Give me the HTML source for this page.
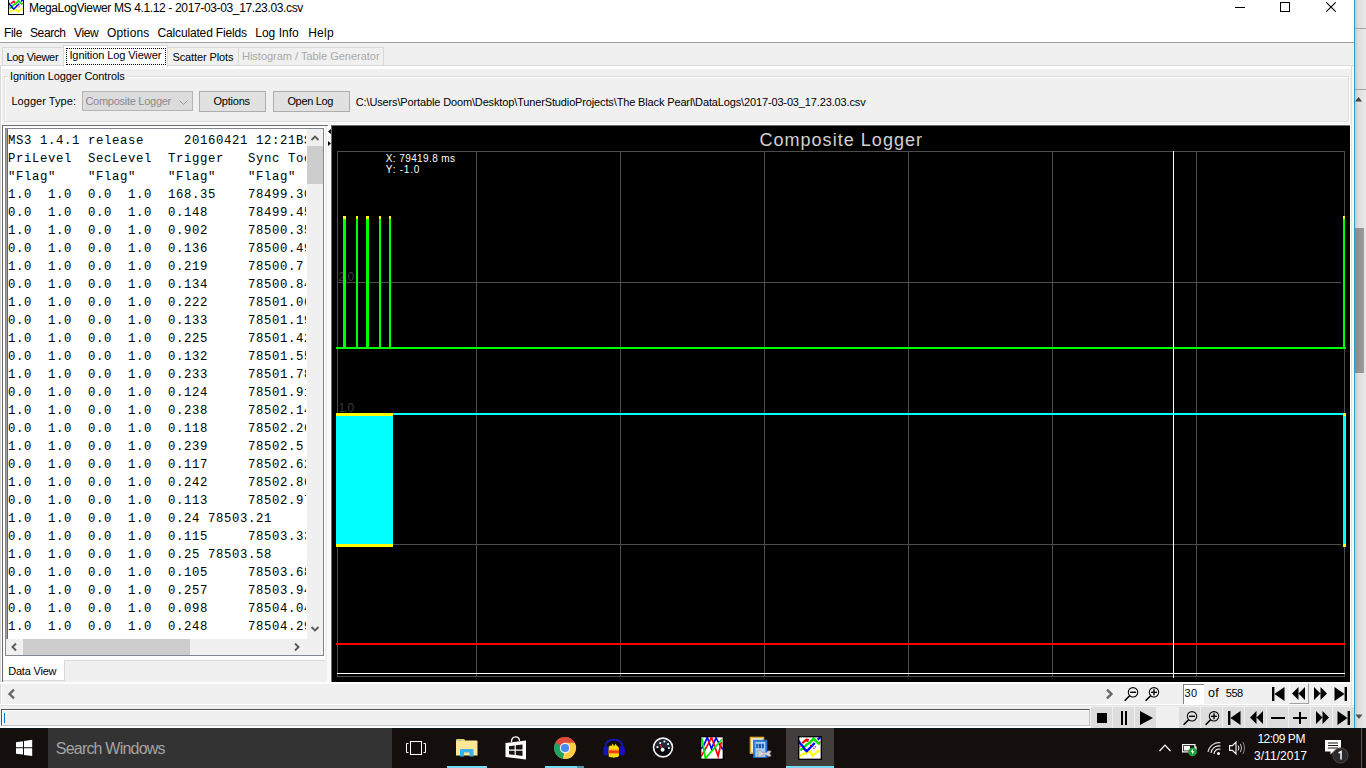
<!DOCTYPE html>
<html lang="en"><head><meta charset="utf-8"><title>MegaLogViewer MS 4.1.12 - 2017-03-03_17.23.03.csv</title>
<style>
html,body{margin:0;padding:0}
body{width:1366px;height:768px;overflow:hidden;position:relative;background:#f0f0f0;font-family:"Liberation Sans",sans-serif;color:#000;font-size:11px}
.a,.a *{position:absolute;box-sizing:border-box}
.t{white-space:pre;line-height:1;margin:0}
svg{display:block;overflow:visible}
/* window chrome */
#titlebar{left:0;top:0;width:1354px;height:42px;background:#fff}
#menuline{left:0;top:42px;width:1354px;height:1px;background:#a0a0a0}
#wborder{left:1354px;top:0;width:1px;height:728px;background:#2b9fd0}
#rstrip{left:1355px;top:0;width:11px;height:728px;background:linear-gradient(90deg,#c9c9c9 0,#dedede 30%,#e9e9e9 100%)}
.title{left:29px;top:1px;font-size:12px;height:14px;line-height:14px}
.menu{top:26px;font-size:12px;height:15px;line-height:15px}
/* tabs */
.tab{background:#f0f0f0;border:1px solid #d9d9d9;border-bottom:none}
.tabsel{background:#fff;border:1px solid #d9d9d9;border-bottom:none}
.tl{font-size:11px;height:14px;line-height:14px}
/* chart */
#chart{left:331px;top:126px;width:1019px;height:556px;background:#000;overflow:hidden}
.gv{top:25px;width:1px;height:526px;background:#4d4d4d}
.gh{left:6px;height:1px;width:1008px;background:#4d4d4d}
/* taskbar */
#taskbar{left:0;top:728px;width:1366px;height:40px;background:#140e0c;overflow:hidden}
/*FIT*/
#ttl{letter-spacing:-0.354px!important;left:29.00px!important}
#m1{letter-spacing:-0.334px!important;left:4.00px!important}
#m2{letter-spacing:-0.400px!important;left:30.00px!important}
#m3{letter-spacing:-0.334px!important;left:74.00px!important}
#m4{letter-spacing:0.167px!important;left:107.00px!important}
#m5{letter-spacing:-0.166px!important;left:157.60px!important}
#m6{letter-spacing:0.025px!important;left:255.20px!important}
#m7{letter-spacing:0.264px!important;left:308.20px!important}
#tb1{letter-spacing:-0.291px!important;left:6.40px!important}
#tb2{letter-spacing:-0.079px!important;left:69.40px!important}
#tb3{letter-spacing:-0.100px!important;left:172.40px!important}
#tb4{letter-spacing:-0.014px!important;left:242.00px!important}
#gb{letter-spacing:-0.087px!important;left:8.00px!important}
#lt{letter-spacing:0.053px!important;left:11.40px!important}
#cb{letter-spacing:-0.267px!important;left:85.40px!important}
#b1{letter-spacing:-0.200px!important;left:213.40px!important}
#b2{letter-spacing:-0.340px!important;left:287.40px!important}
#pth{letter-spacing:-0.140px!important;left:355.80px!important}
#dv{letter-spacing:-0.200px!important;left:8.20px!important}
#n30{letter-spacing:0.400px!important;left:1184.40px!important}
#nof{letter-spacing:0.400px!important;left:1208.00px!important}
#n558{letter-spacing:-0.500px!important;left:1225.80px!important}
#sw{letter-spacing:-0.796px!important;left:55.80px!important}
#clk{letter-spacing:-0.483px!important;left:1257.40px!important}
#dat{letter-spacing:0.046px!important;left:1254.00px!important}
#ctitle{letter-spacing:1.039px!important;left:428.40px!important}
#rx{letter-spacing:0.401px!important;left:54.80px!important}
#ry{letter-spacing:0.768px!important;left:54.80px!important}
#ax2{letter-spacing:-0.400px!important;left:7.20px!important}
#ax1{letter-spacing:-0.500px!important;left:7.40px!important}
/*ENDFIT*/
</style></head><body>

<!-- ===== window chrome ===== -->
<div class="a" id="titlebar"></div>
<div class="a" id="menuline"></div>
<div class="a" id="wborder"></div>
<div class="a" id="rstrip"></div>
<div class="a" style="left:1355px;top:28px;width:11px;height:1px;background:#a3a3a3"></div>
<div class="a" style="left:1355px;top:89px;width:11px;height:1px;background:#a3a3a3"></div>
<div class="a" style="left:1355px;top:228px;width:9px;height:145px;background:linear-gradient(90deg,#8c8a8a,#9c9c9c)"></div>
<svg class="a" style="left:1355px;top:96px" width="8" height="6"><path d="M0 5.5L3.5 1L7 5.5Z" fill="#404040"/></svg>
<svg class="a" style="left:1355px;top:714px" width="8" height="6"><path d="M0.5 0.5L4 5L7.5 0.5Z" fill="#505050"/></svg>

<!-- title bar -->
<svg class="a" style="left:8px;top:-1px;overflow:hidden" width="16" height="16" viewBox="0 0 24 24"><rect x="0.6" y="0.6" width="22.8" height="22.8" fill="#fff" stroke="#000" stroke-width="1.5"/><polyline points="1.75,20.1 4.25,18.4 8.4,16.75 12.2,15.5 14.7,19.7 18.4,16.3 21.75,14.25" fill="none" stroke="#ffff00" stroke-width="2.2"/><polyline points="4.25,7.2 8.4,3.6 9.7,3.8 9.3,5.9" fill="none" stroke="#ff0000" stroke-width="2.2"/><path d="M1.2 10.5H2.6M12 9.5H13.2M21.2 6.3H22.4" stroke="#ff0000" stroke-width="1.6"/><polyline points="15.5,12.6 18.4,9.7" fill="none" stroke="#ff3030" stroke-width="1.6" stroke-dasharray="1.2 0.8"/><polyline points="2.2,14.25 6.3,11.3 8.4,8.8 11.75,6.75 15.5,2.6 18.4,5.5 21.75,8.4" fill="none" stroke="#00e400" stroke-width="2.5"/><polyline points="0.6,4.9 2.2,7.6 4.9,10.5 6.75,13.4 8.8,15.1 12.6,11.3 16.75,7" fill="none" stroke="#0000ff" stroke-width="2.3"/><polyline points="19.7,3.8 22.2,1.3" fill="none" stroke="#0000ff" stroke-width="2.3"/><rect x="0.6" y="0.6" width="22.8" height="22.8" fill="none" stroke="#000" stroke-width="1.5"/></svg>
<div class="a t title" id="ttl">MegaLogViewer MS 4.1.12 - 2017-03-03_17.23.03.csv</div>
<svg class="a" style="left:1235px;top:7px" width="10" height="1"><rect width="10" height="1" fill="#000"/></svg>
<svg class="a" style="left:1280px;top:2px" width="10" height="10"><rect x="0.5" y="0.5" width="9" height="9" fill="none" stroke="#000"/></svg>
<svg class="a" style="left:1326px;top:2px" width="10" height="10"><path d="M0.3 0.3L9.7 9.7M9.7 0.3L0.3 9.7" stroke="#000" stroke-width="1.1" fill="none"/></svg>

<!-- menu bar -->
<div class="a t menu" id="m1" style="left:4px">File</div>
<div class="a t menu" id="m2" style="left:31px">Search</div>
<div class="a t menu" id="m3" style="left:74px">View</div>
<div class="a t menu" id="m4" style="left:107px">Options</div>
<div class="a t menu" id="m5" style="left:158px">Calculated Fields</div>
<div class="a t menu" id="m6" style="left:255px">Log Info</div>
<div class="a t menu" id="m7" style="left:308px">Help</div>


<!-- ===== main tabs ===== -->
<div class="a tab" style="left:2px;top:47px;width:62px;height:19px"></div>
<div class="a tab" style="left:167px;top:47px;width:72px;height:19px"></div>
<div class="a tab" style="left:238px;top:47px;width:146px;height:19px"></div>
<div class="a" style="left:0;top:65px;width:1354px;height:1px;background:#d9d9d9"></div>
<div class="a" style="left:0;top:66px;width:1px;height:640px;background:#d9d9d9"></div>
<div class="a" style="left:1px;top:66px;width:1351px;height:3px;background:#fff"></div>
<div class="a" style="left:1px;top:66px;width:1px;height:639px;background:#fff"></div>
<div class="a" style="left:1351px;top:66px;width:1px;height:640px;background:#e0e0e0"></div><div class="a" style="left:1352px;top:66px;width:2px;height:662px;background:#fdfbfa"></div><div class="a" style="left:1350px;top:124px;width:1px;height:560px;background:#fff"></div><div class="a" style="left:3px;top:124px;width:1348px;height:1px;background:#fff"></div>
<div class="a tabsel" style="left:63px;top:45px;width:105px;height:22px"></div>
<div class="a" style="left:66px;top:48px;width:100px;height:17px;border:1px dotted #000"></div>
<div class="a t tl" id="tb1" style="left:7px;top:50px">Log Viewer</div>
<div class="a t tl" id="tb2" style="left:70px;top:48px">Ignition Log Viewer</div>
<div class="a t tl" id="tb3" style="left:172px;top:50px">Scatter Plots</div>
<div class="a t tl" id="tb4" style="left:243px;top:49px;color:#a9a9a9">Histogram / Table Generator</div>

<!-- ===== ignition logger controls ===== -->
<div class="a" style="left:4px;top:76px;width:1345px;height:46px;border:1px solid #dcdcdc;box-shadow:1px 1px 0 #fff, inset 1px 1px 0 #fff"></div>
<div class="a t tl" id="gb" style="left:8px;top:69px;background:#f0f0f0;padding:0 2px">Ignition Logger Controls</div>
<div class="a t tl" id="lt" style="left:12px;top:94px">Logger Type:</div>
<div class="a" style="left:82px;top:91px;width:111px;height:20px;background:#dcdcdc;border:1px solid #b4b4b4"></div>
<div class="a t tl" id="cb" style="left:86px;top:94px;color:#8a8a8a">Composite Logger</div>
<svg class="a" style="left:179px;top:100px" width="9" height="5"><path d="M0.5 0.5L4.5 4.5L8.5 0.5" fill="none" stroke="#9c9c9c" stroke-width="1"/></svg>
<div class="a" style="left:199px;top:91px;width:67px;height:21px;background:#e1e1e1;border:1px solid #adadad"></div>
<div class="a t tl" id="b1" style="left:213px;top:94px">Options</div>
<div class="a" style="left:273px;top:91px;width:77px;height:21px;background:#e1e1e1;border:1px solid #adadad"></div>
<div class="a t tl" id="b2" style="left:287px;top:94px">Open Log</div>
<div class="a t" id="pth" style="left:356px;top:95px;font-size:11px;height:14px;line-height:14px">C:\Users\Portable Doom\Desktop\TunerStudioProjects\The Black Pearl\DataLogs\2017-03-03_17.23.03.csv</div>


<!-- ===== data view panel ===== -->
<div class="a" style="left:2px;top:125px;width:326px;height:557px;background:#f0f0f0;border-top:1px solid #696969;border-left:1px solid #696969"></div>
<div class="a" style="left:3px;top:126px;width:322px;height:534px;background:#fff"></div>
<div class="a" style="left:5px;top:128px;width:319px;height:528px;background:#f0f0f0;border:1px solid #828790"></div>
<div class="a" style="left:6px;top:129px;width:2px;height:510px;background:linear-gradient(90deg,#a0a0a0 50%,#696969 50%)"></div>
<div class="a" id="ta" style="left:8px;top:129px;width:299px;height:510px;background:#fff;overflow:hidden;border-right:1px solid #fff"><pre class="t" id="tatxt" style="left:0;top:3px;font-family:'Liberation Mono',monospace;font-size:12.3px;letter-spacing:0.62px;line-height:18px;color:#000">MS3 1.4.1 release     20160421 12:21BST
PriLevel  SecLevel  Trigger   Sync ToothTime
&quot;Flag&quot;    &quot;Flag&quot;    &quot;Flag&quot;    &quot;Flag&quot;
1.0  1.0  0.0  1.0  168.35    78499.30
0.0  1.0  0.0  1.0  0.148     78499.45
1.0  1.0  0.0  1.0  0.902     78500.35
0.0  1.0  0.0  1.0  0.136     78500.49
1.0  1.0  0.0  1.0  0.219     78500.7
0.0  1.0  0.0  1.0  0.134     78500.84
1.0  1.0  0.0  1.0  0.222     78501.06
0.0  1.0  0.0  1.0  0.133     78501.19
1.0  1.0  0.0  1.0  0.225     78501.42
0.0  1.0  0.0  1.0  0.132     78501.55
1.0  1.0  0.0  1.0  0.233     78501.78
0.0  1.0  0.0  1.0  0.124     78501.91
1.0  1.0  0.0  1.0  0.238     78502.14
0.0  1.0  0.0  1.0  0.118     78502.26
1.0  1.0  0.0  1.0  0.239     78502.5
0.0  1.0  0.0  1.0  0.117     78502.62
1.0  1.0  0.0  1.0  0.242     78502.86
0.0  1.0  0.0  1.0  0.113     78502.97
1.0  1.0  0.0  1.0  0.24 78503.21
0.0  1.0  0.0  1.0  0.115     78503.33
1.0  1.0  0.0  1.0  0.25 78503.58
0.0  1.0  0.0  1.0  0.105     78503.68
1.0  1.0  0.0  1.0  0.257     78503.94
0.0  1.0  0.0  1.0  0.098     78504.04
1.0  1.0  0.0  1.0  0.248     78504.29</pre></div>
<!-- v scrollbar -->
<div class="a" style="left:307px;top:146px;width:16px;height:38px;background:#cdcdcd"></div>
<svg class="a" style="left:311px;top:135px" width="8" height="6"><path d="M0.5 5L4 1.5L7.5 5" fill="none" stroke="#5a5a5a" stroke-width="1.9"/></svg>
<svg class="a" style="left:311px;top:626px" width="8" height="6"><path d="M0.5 1L4 4.5L7.5 1" fill="none" stroke="#5a5a5a" stroke-width="1.9"/></svg>
<!-- h scrollbar -->
<div class="a" style="left:23px;top:639px;width:167px;height:16px;background:#cdcdcd"></div>
<svg class="a" style="left:11px;top:643px" width="6" height="8"><path d="M5 0.5L1.5 4L5 7.5" fill="none" stroke="#5a5a5a" stroke-width="1.9"/></svg>
<svg class="a" style="left:294px;top:643px" width="6" height="8"><path d="M1 0.5L4.5 4L1 7.5" fill="none" stroke="#5a5a5a" stroke-width="1.9"/></svg>
<!-- bottom tab -->
<div class="a" style="left:3px;top:660px;width:62px;height:21px;background:#fff;border-right:1px solid #d9d9d9;border-bottom:1px solid #d9d9d9"></div>
<div class="a" style="left:65px;top:660px;width:260px;height:1px;background:#d9d9d9"></div>
<div class="a t tl" id="dv" style="left:9px;top:664px">Data View</div>
<!-- split divider -->
<div class="a" style="left:327px;top:126px;width:4px;height:556px;background:#fafafa"></div>
<svg class="a" style="left:328px;top:129px" width="3" height="5"><path d="M3 0L0 2.5L3 5Z" fill="#000"/></svg>
<svg class="a" style="left:328px;top:141px" width="3" height="5"><path d="M0 0L3 2.5L0 5Z" fill="#000"/></svg>

<!-- ===== chart ===== -->
<div class="a" style="left:331px;top:125px;width:1019px;height:1px;background:#696969"></div>
<div class="a" id="chart">
<div style="left:0;top:0;width:1px;height:556px;background:#6e6e6e"></div>
<!-- grid -->
<div class="gv" style="left:6px"></div><div class="gv" style="left:145px"></div><div class="gv" style="left:289px"></div><div class="gv" style="left:433px"></div><div class="gv" style="left:577px"></div><div class="gv" style="left:721px"></div><div class="gv" style="left:865px"></div><div class="gv" style="left:1013px"></div>
<div class="gh" style="top:25px"></div><div class="gh" style="top:156px;width:1004px"></div><div class="gh" style="top:287px"></div><div class="gh" style="top:418px;width:1004px"></div><div class="gh" style="top:550px"></div>
<div style="left:6px;top:547px;width:1008px;height:1px;background:#fff"></div>
<!-- axis labels -->
<div class="t" id="ax2" style="left:8px;top:145px;font-size:12px;color:#3a3a3a;height:12px">2.0</div>
<div class="t" id="ax1" style="left:8px;top:276px;font-size:12px;color:#3a3a3a;height:12px">1.0</div>
<!-- title -->
<div class="t" id="ctitle" style="left:428px;top:4px;font-size:18px;height:20px;line-height:20px;color:#d2d2d2;letter-spacing:1px">Composite Logger</div>
<!-- cursor readout -->
<div class="t" id="rx" style="left:56px;top:27px;font-size:10px;height:11px;line-height:11px;color:#fff">X: 79419.8 ms</div>
<div class="t" id="ry" style="left:56px;top:38px;font-size:10px;height:11px;line-height:11px;color:#fff">Y: -1.0</div>
<!-- green trace -->
<div style="left:5px;top:221px;width:1010px;height:2px;background:#00ff00"></div>
<div style="left:12px;top:90px;width:3px;height:132px;background:#00ff00;border-top:3px solid #ffff00"></div>
<div style="left:25px;top:90px;width:2px;height:132px;background:#00ff00;border-top:3px solid #ffff00"></div>
<div style="left:35px;top:90px;width:3px;height:132px;background:#00ff00;border-top:3px solid #ffff00"></div>
<div style="left:48px;top:90px;width:2px;height:132px;background:#00ff00;border-top:3px solid #ffff00"></div>
<div style="left:58px;top:90px;width:2px;height:132px;background:#00ff00;border-top:3px solid #ffff00"></div>
<div style="left:1012px;top:90px;width:2px;height:132px;background:#00ff00;border-top:3px solid #ffff00"></div>
<!-- cyan trace -->
<div style="left:5px;top:287px;width:57px;height:134px;background:#00ffff;border-top:3px solid #ffff00;border-bottom:3px solid #ffff00"></div>
<div style="left:62px;top:287px;width:953px;height:2px;background:#00ffff"></div>
<div style="left:1012px;top:287px;width:3px;height:134px;background:#00ffff;border-top:3px solid #ffff00;border-bottom:3px solid #ffff00"></div>
<!-- red trace -->
<div style="left:5px;top:517px;width:1009px;height:2px;background:#ff0000"></div>
<!-- cursor -->
<div style="left:842px;top:25px;width:1px;height:527px;background:#fff"></div>
</div>


<!-- ===== bottom bars ===== -->
<div class="a" style="left:0;top:682px;width:1354px;height:2px;background:#fdfdfd"></div>
<div class="a" style="left:0;top:704px;width:1354px;height:1px;background:#fff"></div><div class="a" style="left:0;top:705px;width:1354px;height:1px;background:#e4e4e4"></div>
<div class="a" style="left:1351px;top:682px;width:1px;height:24px;background:#e3e3e3"></div>
<svg class="a" style="left:8px;top:689px" width="7" height="10"><path d="M6 0.7L1.6 5L6 9.3" fill="none" stroke="#666" stroke-width="2.4"/></svg>
<svg class="a" style="left:1106px;top:689px" width="7" height="10"><path d="M1 0.7L5.4 5L1 9.3" fill="none" stroke="#666" stroke-width="2.4"/></svg>
<svg class="a" style="left:1124px;top:687px" width="15" height="15" viewBox="0 0 15 15"><circle cx="9" cy="5.3" r="4.7" fill="none" stroke="#000" stroke-width="1.1"/><path d="M6 5.3H12" stroke="#000" stroke-width="1.4"/><path d="M5.6 8.8L0.6 13.8" stroke="#000" stroke-width="1.6"/></svg><svg class="a" style="left:1145px;top:687px" width="15" height="15" viewBox="0 0 15 15"><circle cx="9" cy="5.3" r="4.7" fill="none" stroke="#000" stroke-width="1.1"/><path d="M6 5.3H12" stroke="#000" stroke-width="1.4"/><path d="M9 2.3V8.3" stroke="#000" stroke-width="1.4"/><path d="M5.6 8.8L0.6 13.8" stroke="#000" stroke-width="1.6"/></svg>
<div class="a" style="left:1183px;top:684px;width:21px;height:20px;background:#fff;border-top:1px solid #828282;border-left:1px solid #828282"></div>
<div class="a t tl" id="n30" style="left:1185px;top:686px">30</div><div class="a t tl" id="nof" style="left:1208px;top:686px;font-size:12.5px">of</div><div class="a t tl" id="n558" style="left:1226px;top:686px">558</div>
<svg class="a" style="left:1272px;top:687px" width="13" height="14"><rect x="0" y="0" width="2.4" height="14" fill="#000"/><path d="M12.5 0L2.4 7L12.5 14Z" fill="#000"/></svg><div class="a" style="left:1289px;top:683px;width:20px;height:21px;border:1px solid;border-color:#fff #a0a0a0 #a0a0a0 #fff"></div><svg class="a" style="left:1292px;top:687px" width="13" height="13"><path d="M6.5 0L0 6.5L6.5 13ZM13 0L6.5 6.5L13 13Z" fill="#000"/></svg><svg class="a" style="left:1314px;top:687px" width="13" height="13"><path d="M0 0L6.5 6.5L0 13ZM6.5 0L13 6.5L6.5 13Z" fill="#000"/></svg><svg class="a" style="left:1334px;top:687px" width="13" height="14"><rect x="10.6" y="0" width="2.4" height="14" fill="#000"/><path d="M0.5 0L10.6 7L0.5 14Z" fill="#000"/></svg>
<div class="a" style="left:1px;top:709px;width:1089px;height:17px;background:#f0f0f0;border:1px solid #c3c3c3;border-top-color:#555;border-left-color:#555;box-shadow:inset 1px 1px 0 #fff"></div><div class="a" style="left:0;top:726px;width:1091px;height:2px;background:#fff"></div>
<div class="a" style="left:4px;top:713px;width:1px;height:10px;background:#0078d7"></div>
<div class="a" style="left:1091px;top:707px;width:21px;height:21px;background:#dddddd"></div><div class="a" style="left:1113px;top:707px;width:21px;height:21px;background:#dddddd"></div><div class="a" style="left:1135px;top:707px;width:21px;height:21px;background:#dddddd"></div><div class="a" style="left:1179px;top:707px;width:21px;height:21px;background:#dddddd"></div><div class="a" style="left:1201px;top:707px;width:21px;height:21px;background:#dddddd"></div><div class="a" style="left:1223px;top:707px;width:21px;height:21px;background:#dddddd"></div><div class="a" style="left:1245px;top:707px;width:21px;height:21px;background:#dddddd"></div><div class="a" style="left:1267px;top:707px;width:21px;height:21px;background:#dddddd"></div><div class="a" style="left:1289px;top:707px;width:21px;height:21px;background:#dddddd"></div><div class="a" style="left:1311px;top:707px;width:21px;height:21px;background:#dddddd"></div><div class="a" style="left:1333px;top:707px;width:21px;height:21px;background:#dddddd"></div>
<div class="a" style="left:1097px;top:713px;width:10px;height:10px;background:#000"></div><div class="a" style="left:1121px;top:711px;width:2px;height:14px;background:#000"></div><div class="a" style="left:1125px;top:711px;width:2px;height:14px;background:#000"></div><svg class="a" style="left:1140px;top:711px" width="13" height="14"><path d="M0 0L13 7L0 14Z" fill="#000"/></svg>
<svg class="a" style="left:1183px;top:711px" width="15" height="15" viewBox="0 0 15 15"><circle cx="9" cy="5.3" r="4.7" fill="none" stroke="#000" stroke-width="1.1"/><path d="M6 5.3H12" stroke="#000" stroke-width="1.4"/><path d="M5.6 8.8L0.6 13.8" stroke="#000" stroke-width="1.6"/></svg><svg class="a" style="left:1205px;top:711px" width="15" height="15" viewBox="0 0 15 15"><circle cx="9" cy="5.3" r="4.7" fill="none" stroke="#000" stroke-width="1.1"/><path d="M6 5.3H12" stroke="#000" stroke-width="1.4"/><path d="M9 2.3V8.3" stroke="#000" stroke-width="1.4"/><path d="M5.6 8.8L0.6 13.8" stroke="#000" stroke-width="1.6"/></svg><svg class="a" style="left:1228px;top:711px" width="13" height="14"><rect x="0" y="0" width="2.4" height="14" fill="#000"/><path d="M12.5 0L2.4 7L12.5 14Z" fill="#000"/></svg><svg class="a" style="left:1250px;top:711px" width="13" height="13"><path d="M6.5 0L0 6.5L6.5 13ZM13 0L6.5 6.5L13 13Z" fill="#000"/></svg><div class="a" style="left:1271px;top:717px;width:14px;height:2px;background:#000"></div><div class="a" style="left:1293px;top:717px;width:14px;height:2px;background:#000"></div><div class="a" style="left:1299px;top:712px;width:2px;height:12px;background:#000"></div><svg class="a" style="left:1316px;top:711px" width="13" height="13"><path d="M0 0L6.5 6.5L0 13ZM6.5 0L13 6.5L6.5 13Z" fill="#000"/></svg><svg class="a" style="left:1337px;top:711px" width="13" height="14"><rect x="10.6" y="0" width="2.4" height="14" fill="#000"/><path d="M0.5 0L10.6 7L0.5 14Z" fill="#000"/></svg>

<!-- ===== taskbar ===== -->
<div class="a" id="taskbar">
<div style="left:0;top:0;width:1366px;height:1px;background:#03141a"></div>
<!-- start -->
<svg style="left:16px;top:11px" width="17" height="18" viewBox="0 0 17 18"><path d="M0 3.2L7 2.2V8.3H0ZM8 2L16.2 0.8V8.3H8ZM0 9.3H7V15.6L0 14.7ZM8 9.3H16.2V17.1L8 15.9Z" fill="#fff"/></svg>
<!-- search -->
<div style="left:48px;top:0;width:344px;height:40px;background:#333333"></div>
<div class="t" id="sw" style="left:56px;top:12px;font-size:16px;height:18px;line-height:18px;color:#a3a3a3">Search Windows</div>
<!-- task view -->
<svg style="left:406px;top:13px" width="20" height="14" viewBox="0 0 20 14"><rect x="4.5" y="0.5" width="11" height="13" fill="none" stroke="#fff"/><path d="M2.5 2.5H0.5V11.5H2.5M17.5 2.5H19.5V11.5H17.5" fill="none" stroke="#fff"/></svg>
<!-- explorer -->
<svg style="left:456px;top:11px" width="22" height="18" viewBox="0 0 22 18"><path d="M0 1.2Q0 0 1.2 0H8L9.5 1.5V3H0Z" fill="#fcd15b"/><rect x="0.5" y="0.8" width="5" height="1" fill="#7fd4e8"/><path d="M0 2.2H9L10 1.4H20.5Q21.5 1.4 21.5 2.4V16.5H0Z" fill="#ffe896"/><path d="M4 17.5V11Q4 10 5 10H16.5Q17.5 10 17.5 11V17.5H13.5V13.5H8V17.5Z" fill="#39b1ea"/></svg>
<div style="left:447px;top:38px;width:40px;height:2px;background:#76d9f5"></div>
<!-- store -->
<svg style="left:505px;top:8px" width="22" height="24" viewBox="0 0 22 24"><path d="M6.5 6Q6.5 0.8 10.5 0.8Q14.5 0.8 14.5 5" fill="none" stroke="#fff" stroke-width="1.3"/><path d="M0.5 7L21 4.5V23.5L0.5 21Z" fill="#fff"/><path d="M4 10.2L9.6 9.5V13.6H4ZM10.8 9.3L17.5 8.5V13.6H10.8ZM4 14.8H9.6V18.9L4 18.3ZM10.8 14.8H17.5V19.9L10.8 19.1Z" fill="#1a1412"/></svg>
<!-- chrome -->
<svg style="left:554px;top:9px" width="22" height="22" viewBox="0 0 22 22"><circle cx="11" cy="11" r="11" fill="#dd4b3e"/><path d="M11 11L1.5 5.5A11 11 0 0 0 9 21.8L14 13Z" fill="#1da362"/><path d="M11 11L9 21.8A11 11 0 0 0 20.6 5.6H11Z" fill="#ffce44"/><path d="M11 11L1.5 5.5A11 11 0 0 1 20.6 5.6H11Z" fill="#dd4b3e"/><circle cx="11" cy="11" r="5.2" fill="#f1f1f1"/><circle cx="11" cy="11" r="4.1" fill="#4a8af4"/></svg>
<div style="left:545px;top:38px;width:32px;height:2px;background:#76d9f5"></div><div style="left:577px;top:38px;width:7px;height:2px;background:#4f95a8"></div>
<!-- audacity -->
<svg style="left:603px;top:10px" width="22" height="21" viewBox="0 0 22 21"><path d="M2.6 10Q2.2 1.6 11 1.6Q19.8 1.6 19.4 10" fill="none" stroke="#1616c4" stroke-width="1.9"/><ellipse cx="2.9" cy="12.8" rx="2.9" ry="4.9" fill="#1212c0"/><ellipse cx="19.1" cy="12.8" rx="2.9" ry="4.9" fill="#1212c0"/><path d="M5.7 18.6V9L7 7.4L8.4 8L9.5 5.6L10.6 7.6L11.6 7.8L12.6 5.6L13.6 7.6L15 8.6L16 10V18L14 19.2H12L10.8 20L9.5 19.2H7Z" fill="#ffd816"/><rect x="5.7" y="11.6" width="10.3" height="4.4" fill="#ff9a10"/><rect x="5.7" y="12.6" width="10.3" height="2.3" fill="#f23a08"/></svg>
<!-- gauge -->
<svg style="left:652px;top:9px" width="22" height="22" viewBox="0 0 22 22"><circle cx="11" cy="10.5" r="9.4" fill="#05060a" stroke="#f4f4f4" stroke-width="1.7"/><path d="M2.4 11A8.6 8.6 0 0 1 19.6 11Z" fill="#1e2a3c"/><rect x="4.5" y="9.3" width="1.8" height="1.8" fill="#fff"/><rect x="7.3" y="5.2" width="1.8" height="1.8" fill="#fff"/><rect x="11.5" y="3.6" width="1.8" height="1.8" fill="#fff"/><rect x="15.2" y="6.2" width="1.8" height="1.8" fill="#fff"/><rect x="16" y="10.2" width="1.8" height="1.8" fill="#fff"/><path d="M10.6 12.6L8.4 7.6" stroke="#f01414" stroke-width="1.5"/><circle cx="10.6" cy="12.8" r="2" fill="#f4f4f4"/></svg>
<!-- mlv hd -->
<svg style="left:700px;top:8px;overflow:hidden" width="24" height="24" viewBox="0 0 24 24"><rect x="0.6" y="0.6" width="22.8" height="22.8" fill="#fff" stroke="#000" stroke-width="1.2"/><polyline points="1.25,12.7 3.5,9.8 7.3,1.5 11.5,12.7 16,1.9 19.4,8.1 22.7,13.5" fill="none" stroke="#0000ff" stroke-width="1.7"/><polyline points="1.25,20.4 8.5,7.3 11.5,1.25 14.4,9.4 18.1,20.2 21,7.3 21.9,6.5" fill="none" stroke="#ff0000" stroke-width="1.7"/><polyline points="1.9,2.3 5.4,22.3 21.9,3.5" fill="none" stroke="#00e800" stroke-width="1.8"/><rect x="0.6" y="0.6" width="22.8" height="22.8" fill="none" stroke="#000" stroke-width="1.2"/></svg>
<!-- tool -->
<svg style="left:749px;top:8px" width="24" height="24" viewBox="0 0 24 24"><rect x="1.4" y="1.4" width="13.2" height="15.8" fill="#f4ecd0" stroke="#d8ac34" stroke-width="1.4"/><rect x="4.6" y="4.2" width="13.4" height="17.4" fill="#2f7ee0" stroke="#1f68c8" stroke-width="0.8"/><rect x="6.4" y="6" width="9.8" height="15" fill="#a8cdf6"/><rect x="7.2" y="7.8" width="1.6" height="4.4" fill="#1a52a8"/><rect x="9.6" y="7.8" width="2.6" height="4.4" fill="#1a52a8"/><rect x="13" y="7.8" width="1.8" height="4.4" fill="#1a52a8"/><path d="M8 15L11.5 14.6L13.5 16.4H17.6L19.2 14.8L22.2 15.2L20.8 17.6L22.2 20L19.2 20.6L17.6 19H13.5L11.5 21L8 20.6L9.6 17.8Z" fill="#d4d4d8" stroke="#8a8a90" stroke-width="0.6"/></svg>
<!-- active app -->
<div style="left:786px;top:0;width:48px;height:40px;background:#413e3c"></div>
<div style="left:786px;top:38px;width:48px;height:2px;background:#76d9f5"></div>
<svg style="left:798px;top:8px;overflow:hidden" width="24" height="24" viewBox="0 0 24 24"><rect x="0.6" y="0.6" width="22.8" height="22.8" fill="#fff" stroke="#000" stroke-width="1.2"/><polyline points="1.75,20.1 4.25,18.4 8.4,16.75 12.2,15.5 14.7,19.7 18.4,16.3 21.75,14.25" fill="none" stroke="#ffff00" stroke-width="2.2"/><polyline points="4.25,7.2 8.4,3.6 9.7,3.8 9.3,5.9" fill="none" stroke="#ff0000" stroke-width="2.2"/><path d="M1.2 10.5H2.6M12 9.5H13.2M21.2 6.3H22.4" stroke="#ff0000" stroke-width="1.6"/><polyline points="15.5,12.6 18.4,9.7" fill="none" stroke="#ff3030" stroke-width="1.6" stroke-dasharray="1.2 0.8"/><polyline points="2.2,14.25 6.3,11.3 8.4,8.8 11.75,6.75 15.5,2.6 18.4,5.5 21.75,8.4" fill="none" stroke="#00e400" stroke-width="2.5"/><polyline points="0.6,4.9 2.2,7.6 4.9,10.5 6.75,13.4 8.8,15.1 12.6,11.3 16.75,7" fill="none" stroke="#0000ff" stroke-width="2.3"/><polyline points="19.7,3.8 22.2,1.3" fill="none" stroke="#0000ff" stroke-width="2.3"/><rect x="0.6" y="0.6" width="22.8" height="22.8" fill="none" stroke="#000" stroke-width="1.2"/></svg>
<!-- tray -->
<svg style="left:1159px;top:16px" width="12" height="8" viewBox="0 0 12 8"><path d="M0.5 7L6 1.2L11.5 7" fill="none" stroke="#fff" stroke-width="1.2"/></svg>
<svg style="left:1182px;top:15px" width="16" height="14" viewBox="0 0 16 14"><rect x="0.6" y="1.6" width="12.3" height="7.3" fill="none" stroke="#fff" stroke-width="1.2"/><rect x="13" y="3.5" width="1.6" height="3.5" fill="#fff"/><rect x="2" y="3" width="6" height="4.5" fill="#fff"/><circle cx="10.6" cy="8.8" r="4.4" fill="#18a038"/><path d="M10.6 5.8L8.8 9H10.2V11.6L12.4 8.2H11Z" fill="#fff"/></svg>
<svg style="left:1207px;top:14px" width="15" height="14" viewBox="0 0 15 14"><path d="M1 10A11 11 0 0 1 13.5 0.8" fill="none" stroke="#fff" stroke-width="1.1" opacity="0.85"/><path d="M4 11A8 8 0 0 1 13.5 4" fill="none" stroke="#fff" stroke-width="1.1"/><path d="M7 12A5 5 0 0 1 13.5 7.3" fill="none" stroke="#fff" stroke-width="1.1"/><circle cx="11.5" cy="11.5" r="1.5" fill="#fff"/></svg>
<svg style="left:1229px;top:13px" width="17" height="14" viewBox="0 0 17 14"><path d="M0.6 4.6H3.4L7 1V13L3.4 9.4H0.6Z" fill="none" stroke="#fff" stroke-width="1.1"/><path d="M9.2 4.6Q10.6 7 9.2 9.4" fill="none" stroke="#fff" stroke-width="1"/><path d="M11.4 2.8Q13.8 7 11.4 11.2" fill="none" stroke="#c8c8c8" stroke-width="1"/><path d="M13.8 1Q17.2 7 13.8 13" fill="none" stroke="#8a8a8a" stroke-width="1"/></svg>
<div class="t" id="clk" style="left:1258px;top:4px;font-size:12px;height:14px;line-height:14px;color:#fff">12:09 PM</div>
<div class="t" id="dat" style="left:1255px;top:21px;font-size:12px;height:14px;line-height:14px;color:#fff">3/11/2017</div>
<svg style="left:1325px;top:11px" width="26" height="26" viewBox="0 0 26 26"><path d="M0 1H16V12.5H8.5L5.5 15.5V12.5H0Z" fill="#fff"/><path d="M3 4H13M3 6.5H13M3 9H13" stroke="#1a1412" stroke-width="1.1"/><circle cx="15.5" cy="16.5" r="7.6" fill="#2a2a2a" stroke="#4a4a4a" stroke-width="1"/><path d="M13.6 14L16 12.6V20.4" fill="none" stroke="#fff" stroke-width="1.5"/></svg>
<div style="left:1361px;top:0;width:1px;height:40px;background:#5a5654"></div>
</div>

</body></html>
